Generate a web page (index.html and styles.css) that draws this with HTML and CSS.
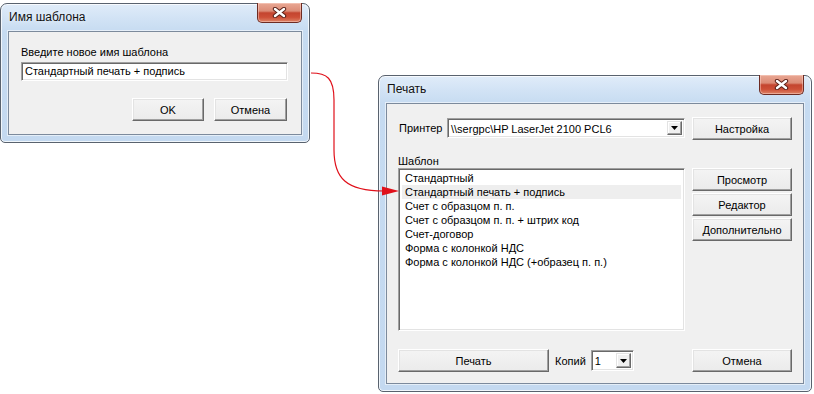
FILE: index.html
```html
<!DOCTYPE html>
<html lang="ru">
<head>
<meta charset="utf-8">
<title>Печать</title>
<link rel="stylesheet" href="styles.css">
</head>
<body>
<div class="desktop">
  <section class="win win-name">
    <header class="titlebar"><span class="title">Имя шаблона</span></header>
    <button class="close" aria-label="Закрыть"><svg width="15" height="11" viewBox="0 0 15 11"><path d="M3 2 L12 9 M12 2 L3 9" stroke="#5a2118" stroke-width="4.4" stroke-linecap="round"/><path d="M3 2 L12 9 M12 2 L3 9" stroke="#ffffff" stroke-width="2.4" stroke-linecap="round"/></svg></button>
    <div class="client client-name">
      <div class="lbl">Введите новое имя шаблона</div>
      <div class="edit">Стандартный печать + подпись</div>
      <div class="btn-row">
        <button class="btn btn-ok">OK</button>
        <button class="btn btn-cancel">Отмена</button>
      </div>
    </div>
  </section>

  <section class="win win-print">
    <header class="titlebar"><span class="title">Печать</span></header>
    <button class="close" aria-label="Закрыть"><svg width="15" height="11" viewBox="0 0 15 11"><path d="M3 2 L12 9 M12 2 L3 9" stroke="#5a2118" stroke-width="4.4" stroke-linecap="round"/><path d="M3 2 L12 9 M12 2 L3 9" stroke="#ffffff" stroke-width="2.4" stroke-linecap="round"/></svg></button>
    <div class="client client-print">
      <div class="printer-row">
        <span class="lbl-inline">Принтер</span>
        <div class="combo combo-printer">
          <span class="combo-text">\\sergpc\HP LaserJet 2100 PCL6</span>
          <span class="dd"><svg width="7" height="4" viewBox="0 0 7 4"><path d="M0 0 H7 L3.5 4 Z" fill="#000"/></svg></span>
        </div>
      </div>
      <div class="right-top"><button class="btn btn-side">Настройка</button></div>

      <div class="template-col">
        <div class="lbl">Шаблон</div>
        <ul class="listbox">
          <li>Стандартный</li>
          <li class="sel">Стандартный печать + подпись</li>
          <li>Счет с образцом п. п.</li>
          <li>Счет с образцом п. п. + штрих код</li>
          <li>Счет-договор</li>
          <li>Форма с колонкой НДС</li>
          <li>Форма с колонкой НДС (+образец п. п.)</li>
        </ul>
      </div>
      <div class="side-buttons">
        <button class="btn btn-side">Просмотр</button>
        <button class="btn btn-side">Редактор</button>
        <button class="btn btn-side">Дополнительно</button>
      </div>

      <div class="bottom-left">
        <button class="btn btn-print">Печать</button>
        <span class="lbl-copies">Копий</span>
        <div class="combo combo-copies">
          <span class="combo-text">1</span>
          <span class="dd"><svg width="7" height="4" viewBox="0 0 7 4"><path d="M0 0 H7 L3.5 4 Z" fill="#000"/></svg></span>
        </div>
      </div>
      <div class="bottom-right"><button class="btn btn-side">Отмена</button></div>
    </div>
  </section>

  <svg class="connector" width="814" height="394" viewBox="0 0 814 394">
    <path d="M311 73 C327 73 334 78 334 100 L334 150 C334 178 346 191 384 191" fill="none" stroke="#e0101a" stroke-width="1.2"/>
    <polygon points="399,191 382,186.5 382,195.5" fill="#e0101a"/>
  </svg>
</div>
</body>
</html>
```

FILE: styles.css
```css
html, body {
  margin: 0;
  padding: 0;
  background: #ffffff;
}

.desktop {
  position: relative;
  width: 814px;
  height: 394px;
  overflow: hidden;
  font-family: "Liberation Sans", Arial, sans-serif;
  font-size: 11px;
  color: #000;
}

/* ---------- window frame ---------- */
.win {
  position: absolute;
  box-sizing: border-box;
  display: flex;
  flex-direction: column;
  padding: 0 7px 7px 7px;
  border: 1px solid #59626e;
  border-radius: 7px 7px 5px 5px;
  background: linear-gradient(180deg, #e0ecf9 0px, #d2e3f5 14px, #c6dbf1 28px, #c4d9f0 100%);
  box-shadow: inset 0 0 0 1px rgba(255, 255, 255, 0.75);
}

.win-name {
  left: 0;
  top: 3px;
  width: 310px;
  height: 140px;
}

.win-print {
  left: 378px;
  top: 75px;
  width: 434px;
  height: 317px;
}

.titlebar {
  height: 27px;
  display: flex;
  align-items: center;
  flex: none;
}

.title {
  padding-left: 1px;
  padding-bottom: 1px;
  font-family: "Liberation Sans", Arial, sans-serif;
  font-size: 12px;
  color: #111;
  text-shadow: 0 0 6px rgba(255, 255, 255, 0.9);
}

.close {
  position: absolute;
  top: -1px;
  right: 7px;
  width: 45px;
  height: 20px;
  padding: 0;
  box-sizing: border-box;
  border: 1px solid #6d2b22;
  border-top: none;
  border-radius: 0 0 5px 5px;
  background: linear-gradient(180deg, #e9a894 0%, #dc8c77 42%, #c4452f 52%, #cd4f37 75%, #de8466 100%);
  box-shadow: inset 0 0 0 1px rgba(255, 220, 210, 0.45);
  display: flex;
  align-items: center;
  justify-content: center;
}

.close svg {
  display: block;
}

/* ---------- client area ---------- */
.client {
  flex: 1;
  box-sizing: border-box;
  background: #f0f0f0;
  border: 1px solid #7c8a9c;
  box-shadow: 0 0 0 1px rgba(255, 255, 255, 0.55);
}

.lbl {
  line-height: 13px;
  height: 13px;
}

/* ---------- controls ---------- */
.btn {
  box-sizing: border-box;
  height: 23px;
  padding: 0;
  margin: 0;
  font-family: "Liberation Sans", Arial, sans-serif;
  font-size: 11px;
  font-weight: 400;
  color: #000;
  background: linear-gradient(180deg, #f4f4f4, #ebebeb);
  border: 1px solid;
  border-color: #ffffff #696969 #696969 #ffffff;
  box-shadow: inset -1px -1px 0 #a0a0a0, inset 1px 1px 0 #e3e3e3;
}

.edit {
  box-sizing: border-box;
  height: 19px;
  background: #fff;
  border: 1px solid;
  border-color: #a0a0a0 #ffffff #ffffff #a0a0a0;
  box-shadow: inset 1px 1px 0 #696969, inset -1px -1px 0 #e3e3e3;
  padding: 0 3px;
  line-height: 17px;
  white-space: nowrap;
}

.combo {
  box-sizing: border-box;
  height: 20px;
  display: flex;
  align-items: stretch;
  background: #fff;
  border: 1px solid;
  border-color: #a0a0a0 #ffffff #ffffff #a0a0a0;
  box-shadow: inset 1px 1px 0 #696969, inset -1px -1px 0 #e3e3e3;
  padding: 2px;
}

.combo-text {
  flex: 1;
  line-height: 16px;
  padding-left: 1px;
  white-space: nowrap;
  overflow: hidden;
}

.dd {
  box-sizing: border-box;
  width: 15px;
  display: flex;
  align-items: center;
  justify-content: center;
  background: #f0f0f0;
  border: 1px solid;
  border-color: #e3e3e3 #696969 #696969 #e3e3e3;
  box-shadow: inset -1px -1px 0 #a0a0a0, inset 1px 1px 0 #ffffff;
}

.dd svg {
  display: block;
  margin-top: 1px;
}

/* ---------- dialog 1 ---------- */
.client-name {
  display: flex;
  flex-direction: column;
  padding: 14px 13px 0 12px;
}

.client-name .edit {
  margin-top: 3px;
}

.btn-row {
  display: flex;
  justify-content: flex-end;
  gap: 10px;
  margin-top: 17px;
  margin-right: 1px;
}

.btn-ok {
  width: 72px;
}

.btn-cancel {
  width: 73px;
}

/* ---------- dialog 2 ---------- */
.client-print {
  display: grid;
  grid-template-columns: 287px 100px;
  column-gap: 7px;
  align-content: start;
  padding: 13px 12px 0 11px;
}

.printer-row {
  display: flex;
  align-items: center;
  height: 22px;
}

.lbl-inline {
  margin-left: 1px;
}

.combo-printer {
  width: 238px;
  margin-left: auto;
  margin-top: -1px;
}

.btn-side {
  width: 100px;
}

.template-col .lbl {
  margin-top: 15px;
}

.listbox {
  list-style: none;
  margin: 0;
  box-sizing: border-box;
  height: 163px;
  background: #fff;
  border: 1px solid;
  border-color: #a0a0a0 #ffffff #ffffff #a0a0a0;
  box-shadow: inset 1px 1px 0 #696969, inset -1px -1px 0 #e3e3e3;
  padding: 2px 2px 0 2px;
}

.listbox li {
  height: 14px;
  line-height: 14px;
  padding-left: 3px;
  margin: 0 1px;
  white-space: nowrap;
}

.listbox li.sel {
  background: #eeeeee;
}

.side-buttons {
  display: flex;
  flex-direction: column;
  gap: 2px;
  padding-top: 28px;
}

.bottom-left {
  display: flex;
  align-items: center;
  margin-top: 18px;
}

.btn-print {
  width: 151px;
}

.lbl-copies {
  margin-left: 6px;
}

.combo-copies {
  width: 43px;
  height: 21px;
  margin-left: 5px;
}

.bottom-right {
  margin-top: 18px;
}

/* ---------- connector ---------- */
.connector {
  position: absolute;
  left: 0;
  top: 0;
  z-index: 5;
  pointer-events: none;
}
```
